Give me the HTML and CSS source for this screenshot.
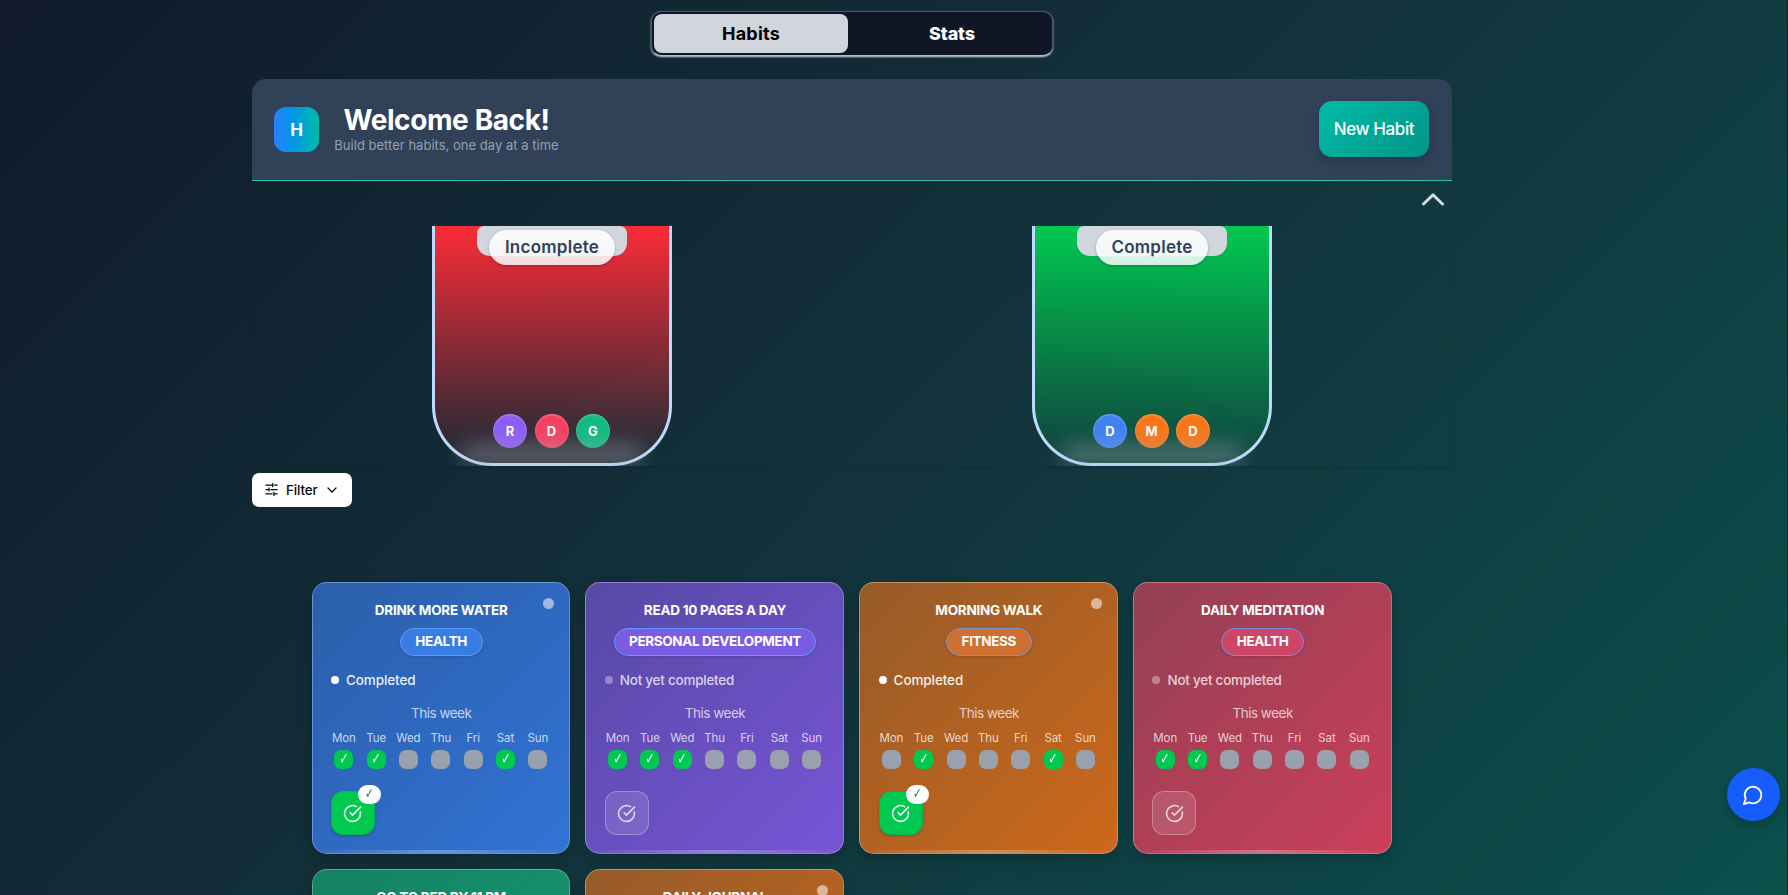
FILE: index.html
```html
<!DOCTYPE html>
<html lang="en">
<head>
<meta charset="utf-8">
<title>Habits</title>
<link rel="stylesheet" href="styles.css">
</head>
<body>
<svg class="defs" aria-hidden="true">
  <symbol id="circle-check" viewBox="0 0 24 24"><path d="M21.801 10A10 10 0 1 1 17 3.335"/><path d="m9 11 3 3L22 4"/></symbol>
</svg>
<main class="page">
  <nav class="tabs"><button class="tab active"><span>Habits</span></button><button class="tab"><span>Stats</span></button></nav>
  <section class="board">
    <header class="header">
      <div class="brand">
        <div class="logo">H</div>
        <div class="greeting"><h1><span>Welcome Back!</span></h1><p><span>Build better habits, one day at a time</span></p></div>
      </div>
      <button class="new-habit"><span>New Habit</span></button>
    </header>
    <div class="toggle"><svg viewBox="0 0 24 14"><path d="M2.500 12 12 2.800 21.500 12"/></svg></div>
    <div class="jars">
      <div class="jar-cell"><div class="jar red">
        <div class="lid"></div><div class="jar-label">Incomplete</div>
        <div class="balls"><b class="violet">R</b><b class="rose">D</b><b class="emerald">G</b></div>
      </div></div>
      <div class="jar-cell"><div class="jar green">
        <div class="lid"></div><div class="jar-label complete">Complete</div>
        <div class="balls"><b class="blue">D</b><b class="orange">M</b><b class="orange">D</b></div>
      </div></div>
    </div>
  </section>
  <button class="filter">
    <svg class="sliders" viewBox="0 0 24 24"><path d="M3 5h10M17 5h4M3 12h4M11 12h10M3 19h10M17 19h4M14 2.500v5M8 9.500v5M16 16.500v5"/></svg>
    <span>Filter</span>
    <svg class="down" viewBox="0 0 12 8"><path d="m2 2 4 4 4-4"/></svg>
  </button>
  <section class="cards" id="cards"></section>
</main>
<button class="chat"><svg viewBox="0 0 24 24"><path d="M7.900 20A9 9 0 1 0 4 16.100L2 22Z"/></svg></button>
<script src="cards.js"></script>
</body>
</html>
```
FILE: styles.css
```css
* { box-sizing: border-box; }
body { margin: 0; height: 895px; overflow: hidden; font-family: Inter, "Open Sans", sans-serif; color: #fff; background: linear-gradient(135deg, #101a2b, #13323b 50%, #0b504c); border-right: 1px solid #0b2a30; }
button { font: inherit; color: inherit; border: 0; padding: 0; margin: 0; }
svg { display: block; fill: none; stroke: currentColor; stroke-linecap: round; stroke-linejoin: round; }
h1, h2, p { margin: 0; }
.defs { position: absolute; width: 0; height: 0; }
.page { width: 1200px; margin-left: 252px; padding-top: 11px; display: flex; flex-direction: column; }
.tabs { align-self: center; width: 402px; height: 45px; padding: 2px; display: flex; border: 1px solid #4a5565; border-bottom-color: #b4bcc4; border-radius: 10px; background: #101626; box-shadow: 0 1px 2px #d1d5dc; }
.tab { flex: 0 0 194px; height: 39px; padding-bottom: 1px; background: none; border-radius: 8px; font-weight: 700; font-size: 18px; letter-spacing: .2px; }
.tab + .tab { flex: 1; padding-left: 6px; font-weight: 800; letter-spacing: -.1px; }
.tab.active { color: #000; background: #d1d5dc; }
.board { margin-top: 23px; height: 387px; border-radius: 14px 14px 0 0; box-shadow: 0 1px 3px rgba(0,0,0,.15); }
.header { height: 102px; padding: 0 23px 0 22px; border-bottom: 1px solid #2bbfa9; border-radius: 14px 14px 0 0; background: #314158; display: flex; align-items: center; justify-content: space-between; }
.brand { display: flex; align-items: center; gap: 15px; }
.logo { width: 45px; height: 45px; border-radius: 12px; background: linear-gradient(90deg, #2b7fff, #0096e8 40%, #00bba7); display: grid; place-items: center; font-size: 17px; font-weight: 700; }
.greeting { text-align: center; width: 225px; padding-bottom: 2px; }
.greeting h1 { font-size: 28px; line-height: 34px; letter-spacing: -.4px; white-space: nowrap; }
.greeting p { font-size: 13px; line-height: 17px; color: #90a1b5; letter-spacing: .02px; white-space: nowrap; }
.new-habit { width: 110px; height: 56px; margin-bottom: 2px; border-radius: 13px; background: linear-gradient(135deg, #00bba7, #009689); font-size: 17px; font-weight: 500; letter-spacing: -.4px; box-shadow: 0 4px 10px rgba(0,0,0,.18); }
.toggle { height: 45px; display: flex; justify-content: flex-end; padding: 11px 7px 0 0; color: #d1d9e2; }
.toggle svg { width: 24px; height: 14px; stroke-width: 3; }
.jars { display: grid; grid-template-columns: 1fr 1fr; }
.jar-cell { display: flex; justify-content: center; }
.jar { width: 240px; height: 240px; border: 3px solid #bedbff; border-top: 0; border-radius: 0 0 60px 60px; position: relative; display: flex; flex-direction: column; align-items: center; }
.jar::after { content: ""; position: absolute; left: 28px; right: 28px; bottom: -3px; height: 22px; background: rgba(165,175,185,.4); filter: blur(10px); clip-path: inset(-30px -30px 0); }
.red { background: linear-gradient(#fb2c36, rgba(251,44,54,.14) 88%, rgba(251,44,54,.08)); }
.green { background: linear-gradient(#00c950, rgba(0,201,80,.14) 92%, rgba(0,201,80,.08)); }
.lid { width: 150px; height: 30px; margin-bottom: -26px; border-radius: 7px 7px 13px 13px; background: #d1d5dc; }
.jar-label { position: relative; width: 126px; height: 35px; border-radius: 18px; line-height: 35px; text-align: center; color: #314158; font-size: 17px; font-weight: 600; letter-spacing: .25px; background: linear-gradient(#f8fafc, rgba(248,250,252,.85)); box-shadow: 0 1px 3px rgba(0,0,0,.25); }
.jar-label.complete { width: 112px; }
.balls { margin: 149px 1px 0 0; display: flex; gap: 7.500px; }
.balls b { width: 34px; height: 34px; border-radius: 50%; display: grid; place-items: center; font-size: 13px; padding-bottom: 1px; box-shadow: inset 0 1px 2px rgba(255,255,255,.3); }
.violet { background: #8e5cf5; } .rose { background: #f5415f; } .emerald { background: #12b981; } .blue { background: #3f82f4; } .orange { background: #f97518; }
.filter { width: 100px; height: 34px; margin-top: 7px; border-radius: 7px; background: #fff; color: #0a0a0a; display: flex; align-items: center; padding: 0 0 1px 12px; font-size: 13.500px; font-weight: 500; letter-spacing: -.15px; }
.sliders { width: 15px; height: 15px; stroke-width: 2; margin-right: 7px; }
.down { width: 12px; height: 8px; stroke-width: 1.300; margin-left: 8px; }
.cards { width: 1080px; margin: 75px 0 0 59.600px; display: grid; grid-template-columns: repeat(4, 1fr); gap: 15px; }
.card { position: relative; height: 272px; border: 1px solid rgba(255,255,255,.28); border-radius: 15px; padding: 17px 18px 0 18.400px; overflow: hidden; display: flex; flex-direction: column; align-items: center; }
.shell { border-radius: 15px; box-shadow: 0 6px 14px rgba(0,0,0,.2); }
.card::after { content: ""; position: absolute; left: 0; right: 0; bottom: 0; height: 3px; background: linear-gradient(90deg, transparent, rgba(255,255,255,.28), transparent); }
.c-blue { background: linear-gradient(135deg, #2b5fa9, #3273d6); --pill: #397de4; --line: #5b9cff; }
.c-violet { background: linear-gradient(135deg, #5749a5, #7755d6); --pill: #7a5ce2; --line: #609cff; }
.c-orange { background: linear-gradient(135deg, #965b2a, #cd681a); --pill: #cf7032; --line: #7895cf; }
.c-rose { background: linear-gradient(135deg, #934055, #cb3f5a); --pill: #cc4668; --line: #7e8de8; }
.c-green { background: linear-gradient(135deg, #158163, #129e70); --pill: #19a877; --line: #5ba8d0; }
.dot { position: absolute; right: 15px; top: 15px; width: 11px; height: 11px; border-radius: 50%; background: rgba(255,255,255,.54); }
.card h2 { font-size: 13.500px; line-height: 20px; font-weight: 700; letter-spacing: -.25px; white-space: nowrap; }
.pill { height: 28px; margin-top: 8px; padding: 0 14.500px; line-height: 25px; border: 1px solid var(--line); border-radius: 14px; background: var(--pill); font-size: 13.500px; font-weight: 700; letter-spacing: -.35px; white-space: nowrap; box-shadow: 0 1px 3px rgba(0,0,0,.15); }
.status { align-self: flex-start; height: 20px; margin-top: 14px; display: flex; align-items: center; gap: 7px; font-size: 13.500px; font-weight: 500; letter-spacing: -.1px; color: rgba(255,255,255,.92); }
.status span { margin-top: -1px; }
.status i { width: 8px; height: 8px; border-radius: 50%; background: #fff; }
.status.off { letter-spacing: -.25px; color: rgba(255,255,255,.76); } .status.off i { background: rgba(255,255,255,.35); }
.week-title { margin-top: 13px; height: 20px; line-height: 20px; font-size: 13.500px; letter-spacing: -.5px; color: rgba(255,255,255,.72); }
.week { align-self: stretch; margin: 7px -2.600px 0 -3.400px; display: grid; grid-template-columns: repeat(7, 32.350px); justify-content: center; text-align: center; font-size: 11.500px; line-height: 16px; color: rgba(255,255,255,.75); letter-spacing: -.1px; }
.box { display: block; width: 19px; height: 19px; margin: 4px auto 0; border-radius: 7px; background: #99a1af; color: #fff; font: 14px/18px "DejaVu Sans", sans-serif; text-align: center; }
.box.on { background: #00c950; }
.tick { display: inline-block; transform: scale(.8, 1.1); }
.check { align-self: flex-start; position: relative; width: 44px; height: 44px; margin-top: 22px; border-radius: 12px; border: 1px solid rgba(255,255,255,.28); background: rgba(255,255,255,.12); color: rgba(255,255,255,.75); display: grid; place-items: center; }
.check svg { width: 19px; height: 19px; stroke-width: 2; }
.check.done { background: #00c950; border-color: #08b551; color: #e8fff0; box-shadow: 0 1px 3px rgba(0,0,0,.2); }
.badge { position: absolute; right: -7px; top: -7px; width: 23px; height: 19px; border-radius: 10px; background: #fff; color: #168a48; font: 13px/18px "DejaVu Sans", sans-serif; text-align: center; }
.chat { position: fixed; left: 1727px; top: 768px; width: 53px; height: 53px; padding-right: 1px; border-radius: 50%; background: #155dfc; display: grid; place-items: center; box-shadow: 0 5px 12px rgba(0,0,0,.2); }
.chat svg { width: 22px; height: 22px; stroke-width: 2; }
```
FILE: cards.js
```javascript
const days = ["Mon", "Tue", "Wed", "Thu", "Fri", "Sat", "Sun"];
const tick = '<span class="tick">✓</span>';
/* title, category, colour, completed today, indexes of completed weekdays */
const habits = [
  ["DRINK MORE WATER", "HEALTH", "blue", true, [0, 1, 5]],
  ["READ 10 PAGES A DAY", "PERSONAL DEVELOPMENT", "violet", false, [0, 1, 2]],
  ["MORNING WALK", "FITNESS", "orange", true, [1, 5]],
  ["DAILY MEDITATION", "HEALTH", "rose", false, [0, 1]],
  ["GO TO BED BY 11 PM", "", "green", false, []],
  ["DAILY JOURNAL", "", "orange", true, []]
];
/* A habit without a category shows its title only. */
const details = (tag, done, on) => `
    <div class="pill">${tag}</div>
    <div class="status ${done ? "" : "off"}"><i></i><span>${done ? "Completed" : "Not yet completed"}</span></div>
    <div class="week-title">This week</div>
    <div class="week">${days.map((d, i) => `<div>${d}<span class="box ${on.includes(i) ? "on" : ""}">${on.includes(i) ? tick : ""}</span></div>`).join("")}</div>
    <div class="check ${done ? "done" : ""}"><svg><use href="#circle-check"/></svg>${done ? `<span class="badge">${tick}</span>` : ""}</div>`;
const card = ([title, tag, color, done, on]) => `
  <div class="shell"><article class="card c-${color}">
    ${done ? '<span class="dot"></span>' : ""}
    <h2>${title}</h2>
    ${tag ? details(tag, done, on) : ""}
  </article></div>`;
document.getElementById("cards").innerHTML = habits.map(card).join("");
```
